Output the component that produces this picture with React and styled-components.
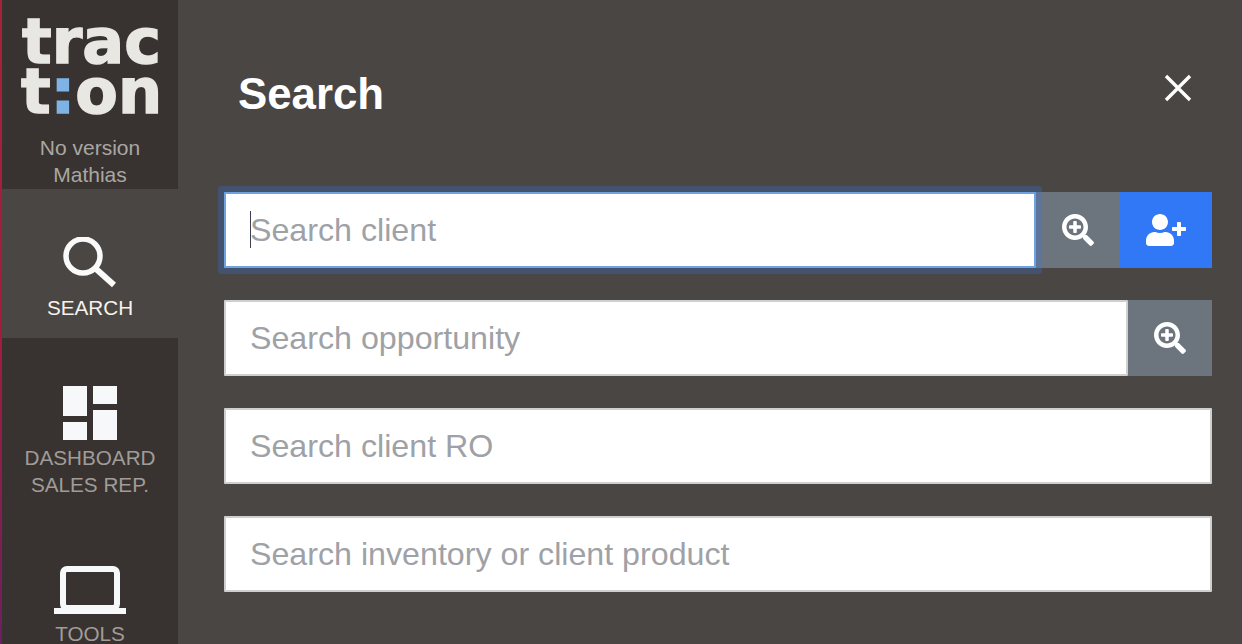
import React from "react";
import styled, { createGlobalStyle } from "styled-components";
import { FaSearchPlus, FaUserPlus } from "react-icons/fa";

const Global = createGlobalStyle`
  html, body { margin: 0; padding: 0; height: 100%; overflow: hidden; }
  body { background: #4a4643; font-family: "Liberation Sans", Arial, sans-serif; }
  * { box-sizing: border-box; }
`;

const Page = styled.div`
  display: flex;
  width: 1242px;
  height: 644px;
  overflow: hidden;
  background: #4a4643;
`;

const Sidebar = styled.nav`
  flex: 0 0 178px;
  height: 644px;
  background: #383330;
  border-left: 2px solid;
  border-image: linear-gradient(#a3243b, #a01c40 55%, #6a2060) 1;
  overflow: hidden;
`;

const Brand = styled.div`
  height: 189px;
  padding-top: 17px;
  text-align: center;
`;

const Logo = styled.div`
  font-family: "DejaVu Sans", sans-serif;
  font-weight: 700;
  font-size: 62px;
  line-height: 50px;
  color: #e9e7e2;
  -webkit-text-stroke: 1.5px #e9e7e2;
  margin-bottom: 17px;
  padding-left: 3px;
`;

const Colon = styled.span`
  color: #7fb2e5;
  -webkit-text-stroke: 1.5px #7fb2e5;
`;

const BrandLine = styled.div`
  font-size: 21px;
  line-height: 27px;
  color: #aaa7a3;
`;

const NavItem = styled.div`
  display: flex;
  flex-direction: column;
  align-items: center;
  padding: 48px 0 17px;
  background: ${(p) => (p.$active ? "#4a4643" : "transparent")};
  color: ${(p) => (p.$active ? "#f5f3ee" : "#a09c98")};
`;

const NavIcon = styled.svg`
  display: block;
  margin-bottom: 4px;
`;

const NavLabel = styled.div`
  font-size: 20.7px;
  line-height: 27px;
  text-align: center;
`;

const Main = styled.main`
  flex: 1;
  padding: 0 30px 0 46px;
`;

const Header = styled.header`
  display: flex;
  align-items: center;
  justify-content: space-between;
  height: 192px;
  padding: 0 19px 4px 14px;
`;

const Title = styled.h1`
  margin: 0;
  font-size: 43.8px;
  font-weight: 700;
  color: #fff;
`;

const CloseButton = styled.button`
  display: flex;
  padding: 0;
  margin-bottom: 12px;
  border: 0;
  background: none;
`;

const Form = styled.div`
  display: flex;
  flex-direction: column;
  gap: 32px;
`;

const Group = styled.div`
  display: flex;
  height: 76px;
`;

const Field = styled.div`
  position: relative;
  z-index: 1;
  flex: 1;
  display: flex;
`;

const Input = styled.input`
  width: 100%;
  height: 100%;
  padding: 0 24px;
  border: 2px solid ${(p) => (p.$focused ? "#6fa3e0" : "#cfcfcf")};
  border-radius: 1px;
  outline: 0;
  background: #fff;
  box-shadow: ${(p) => (p.$focused ? "0 0 0 6px rgba(48, 120, 245, 0.25)" : "none")};
  font-family: "Liberation Sans", Arial, sans-serif;
  font-size: 32.2px;
  color: #333;

  &::placeholder {
    color: #9ea1a6;
    opacity: 1;
  }
`;

const Caret = styled.span`
  position: absolute;
  left: 26px;
  top: 19px;
  width: 1px;
  height: 37px;
  background: #3c4250;
`;

const IconButton = styled.button`
  display: flex;
  align-items: center;
  justify-content: center;
  flex: 0 0 ${(p) => p.$width}px;
  padding: 0;
  border: 0;
  background: ${(p) => p.$color};
  color: #fff;
  font-size: ${(p) => p.$size}px;
`;

const App = () => {
  return (
    <Page>
      <Global />
      <Sidebar>
        <Brand>
          <Logo>
            trac
            <br />
            t<Colon>:</Colon>on
          </Logo>
          <BrandLine>No version</BrandLine>
          <BrandLine>Mathias</BrandLine>
        </Brand>

        <NavItem $active>
          <NavIcon width="54" height="53" viewBox="0 0 54 53" fill="none" stroke="#fafafa">
            <circle cx="20" cy="19" r="17" strokeWidth="5.5" />
            <path d="M32 31 L51 48" strokeWidth="6" />
          </NavIcon>
          <NavLabel>SEARCH</NavLabel>
        </NavItem>

        <NavItem>
          <NavIcon width="54" height="54" viewBox="0 0 54 54" fill="#f7f8fa">
            <path d="M0 0h24v30H0zM30 0h24v18H30zM0 36h24v18H0zM30 24h24v30H30z" />
          </NavIcon>
          <NavLabel>
            DASHBOARD
            <br />
            SALES REP.
          </NavLabel>
        </NavItem>

        <NavItem>
          <NavIcon width="72" height="53" viewBox="0 0 72 53" fill="none">
            <rect x="9" y="6" width="54" height="39" rx="4" stroke="#f7f8fa" strokeWidth="6" />
            <path d="M0 45h72v6H0z" fill="#f7f8fa" />
          </NavIcon>
          <NavLabel>TOOLS</NavLabel>
        </NavItem>
      </Sidebar>

      <Main>
        <Header>
          <Title>Search</Title>
          <CloseButton aria-label="Close">
            <svg width="30" height="30" viewBox="0 0 30 30" stroke="#fff" strokeWidth="3.4">
              <path d="M3 3 L27 27 M27 3 L3 27" />
            </svg>
          </CloseButton>
        </Header>

        <Form>
          <Group>
            <Field>
              <Input $focused placeholder="Search client" />
              <Caret />
            </Field>
            <IconButton $width={84} $color="#6c757d" $size={32}>
              <FaSearchPlus />
            </IconButton>
            <IconButton $width={92} $color="#3078f5" $size={40}>
              <FaUserPlus />
            </IconButton>
          </Group>
          <Group>
            <Field>
              <Input placeholder="Search opportunity" />
            </Field>
            <IconButton $width={84} $color="#6c757d" $size={32}>
              <FaSearchPlus />
            </IconButton>
          </Group>
          <Group>
            <Field>
              <Input placeholder="Search client RO" />
            </Field>
          </Group>
          <Group>
            <Field>
              <Input placeholder="Search inventory or client product" />
            </Field>
          </Group>
        </Form>
      </Main>
    </Page>
  );
};

export default App;
